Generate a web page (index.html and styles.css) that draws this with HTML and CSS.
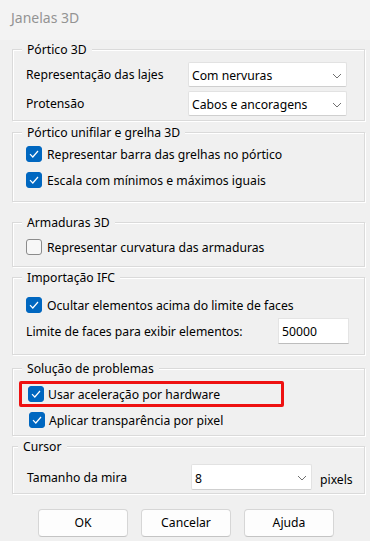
FILE: index.html
```html
<!doctype html>
<html lang="pt">
<head>
	<meta charset="UTF-8">
	<title>Janelas 3D</title>
	<link rel="stylesheet" href="styles.css">
</head>
<body>
	<div class="window">
		<div class="titlebar">Janelas 3D</div>

		<div class="group g1">
			<div class="legend">Pórtico 3D</div>
			<div class="form-grid">
				<span class="label">Representação das lajes</span>
				<div class="select">
					<span>Com nervuras</span>
					<svg width="10" height="6" viewBox="0 0 10 6"><path d="M1 1 L5 5 L9 1" fill="none" stroke="#707070" stroke-width="1"/></svg>
				</div>
				<span class="label">Protensão</span>
				<div class="select">
					<span>Cabos e ancoragens</span>
					<svg width="10" height="6" viewBox="0 0 10 6"><path d="M1 1 L5 5 L9 1" fill="none" stroke="#707070" stroke-width="1"/></svg>
				</div>
			</div>
		</div>

		<div class="group g2">
			<div class="legend">Pórtico unifilar e grelha 3D</div>
			<div class="check-row">
				<span class="box on"><svg width="10" height="8" viewBox="0 0 10 8"><path d="M1 4.2 L3.8 7 L9 1" fill="none" stroke="#fff" stroke-width="1.2"/></svg></span>
				<span>Representar barra das grelhas no pórtico</span>
			</div>
			<div class="check-row">
				<span class="box on"><svg width="10" height="8" viewBox="0 0 10 8"><path d="M1 4.2 L3.8 7 L9 1" fill="none" stroke="#fff" stroke-width="1.2"/></svg></span>
				<span>Escala com mínimos e máximos iguais</span>
			</div>
		</div>

		<div class="group g3">
			<div class="legend">Armaduras 3D</div>
			<div class="check-row">
				<span class="box"></span>
				<span>Representar curvatura das armaduras</span>
			</div>
		</div>

		<div class="group g4">
			<div class="legend">Importação IFC</div>
			<div class="check-row">
				<span class="box on"><svg width="10" height="8" viewBox="0 0 10 8"><path d="M1 4.2 L3.8 7 L9 1" fill="none" stroke="#fff" stroke-width="1.2"/></svg></span>
				<span>Ocultar elementos acima do limite de faces</span>
			</div>
			<div class="limit-row">
				<span class="label">Limite de faces para exibir elementos:</span>
				<div class="input">50000</div>
			</div>
		</div>

		<div class="group g5">
			<div class="legend">Solução de problemas</div>
			<div class="check-row marked">
				<span class="box on"><svg width="10" height="8" viewBox="0 0 10 8"><path d="M1 4.2 L3.8 7 L9 1" fill="none" stroke="#fff" stroke-width="1.2"/></svg></span>
				<span>Usar aceleração por hardware</span>
			</div>
			<div class="check-row indent">
				<span class="box on"><svg width="10" height="8" viewBox="0 0 10 8"><path d="M1 4.2 L3.8 7 L9 1" fill="none" stroke="#fff" stroke-width="1.2"/></svg></span>
				<span>Aplicar transparência por pixel</span>
			</div>
		</div>

		<div class="group g6">
			<div class="legend">Cursor</div>
			<div class="cursor-row">
				<span class="label">Tamanho da mira</span>
				<div class="select">
					<span>8</span>
					<svg width="10" height="6" viewBox="0 0 10 6"><path d="M1 1 L5 5 L9 1" fill="none" stroke="#707070" stroke-width="1"/></svg>
				</div>
				<span class="unit">pixels</span>
			</div>
		</div>

		<div class="buttons">
			<div class="btn">OK</div>
			<div class="btn">Cancelar</div>
			<div class="btn">Ajuda</div>
		</div>
	</div>
</body>
</html>
```

FILE: styles.css
```css
*{
	margin: 0;
	padding: 0;
	box-sizing: border-box;
}
body{
	background: #f0f0f0;
	font-family: "Noto Sans", "Liberation Sans", sans-serif;
	font-size: 12.2px;
	color: #000;
}
.window{
	width: 370px;
	height: 541px;
	background: #f0f0f0;
	overflow: hidden;
}
.titlebar{
	height: 40px;
	padding-left: 11px;
	line-height: 36px;
	font-size: 14px;
	color: #939393;
	background: #f3f3f3;
}

/* group boxes */
.group{
	width: 353px;
	margin-left: 12px;
	padding: 0 13px;
	border: 1px solid #dadada;
	box-shadow: inset 1px 1px 0 #fff, 1px 1px 0 #fff;
}
.legend{
	width: fit-content;
	margin: -8px 0 0 -4px;
	padding: 0 5px;
	line-height: 16px;
	background: #f0f0f0;
}
.g1{ margin-top: 9px; height: 72px; }
.g2{ margin-top: 11px; height: 70px; }
.g3{ margin-top: 20px; height: 45px; }
.g4{ margin-top: 10px; height: 78px; }
.g5{ margin-top: 13px; height: 68px; }
.g6{ margin-top: 10px; height: 48px; }

.g6 .legend{ margin-left: -8px; }

/* selects / inputs */
.form-grid{
	display: grid;
	grid-template-columns: 162px 159px;
	row-gap: 4px;
	align-items: center;
	margin-top: 4px;
}
.select{
	height: 25px;
	display: flex;
	align-items: center;
	justify-content: space-between;
	padding: 0 4px 0 3px;
	background: #fff;
	border: 1px solid #e2e2e2;
	border-bottom-color: #cfcfcf;
	border-radius: 2px;
}
.select span{
	padding-top: 2px;
}
.select svg{
	margin-top: 2px;
}

/* checkboxes */
.check-row{
	height: 26px;
	display: flex;
	align-items: center;
	gap: 5px;
}
.g2 .check-row:first-of-type{ margin-top: 1px; }
.g3 .check-row{ margin-top: 3px; }
.g4 .check-row{ margin-top: 6px; }
.box{
	width: 16px;
	height: 16px;
	flex: none;
	display: flex;
	align-items: center;
	justify-content: center;
	border: 1px solid #8b8b8b;
	border-radius: 3px;
	background: #f7f7f7;
}
.box.on{
	border-color: #0067c0;
	background: #0067c0;
}

.limit-row{
	height: 26px;
	display: grid;
	grid-template-columns: 252px 71px;
	align-items: center;
}
.input{
	height: 26px;
	padding: 4px 3px 0;
	background: #fff;
	border: 1px solid #e4e4e4;
	border-bottom-color: #bdbdbd;
}

.marked{
	width: 265px;
	margin: 4px 0 0 -7px;
	padding-left: 6px;
	border: 3px solid #ee1111;
	border-radius: 2px;
	gap: 4px;
}
.indent{
	padding-left: 3px;
	gap: 4px;
}

.cursor-row{
	display: grid;
	grid-template-columns: 164px 121px auto;
	align-items: center;
	margin: 9px 0 0 1px;
}
.cursor-row .select{
	height: 26px;
}
.unit{
	padding: 4px 0 0 8px;
}

/* buttons */
.buttons{
	display: flex;
	gap: 13px;
	margin: 15px 0 0 38px;
}
.btn{
	width: 90px;
	height: 28px;
	line-height: 26px;
	text-align: center;
	background: #fdfdfd;
	border: 1px solid #d6d6d6;
	border-bottom-color: #c4c4c4;
	border-radius: 4px;
}
```
